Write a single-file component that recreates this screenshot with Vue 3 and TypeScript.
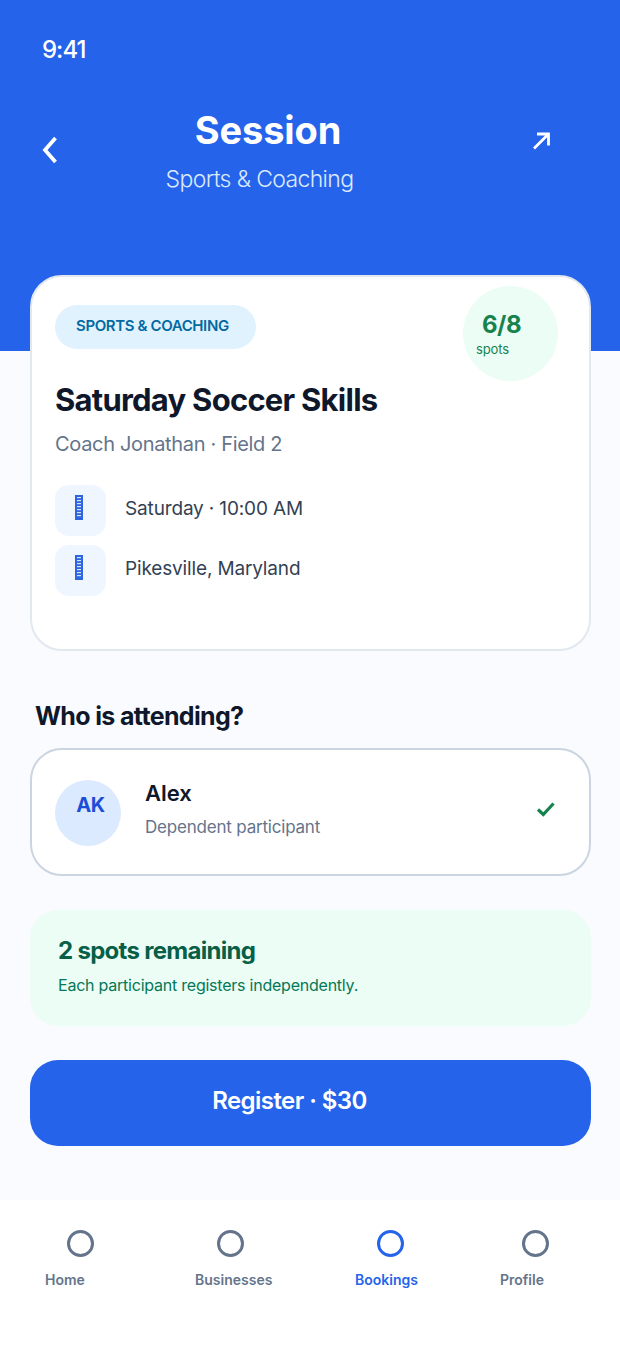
<script setup lang="ts">
interface InfoRow {
  id: string
  label: string
}

interface NavItem {
  label: string
  active: boolean
}

const infoRows: InfoRow[] = [
  { id: 'when', label: 'Saturday · 10:00 AM' },
  { id: 'where', label: 'Pikesville, Maryland' },
]

const navItems: NavItem[] = [
  { label: 'Home', active: false },
  { label: 'Businesses', active: false },
  { label: 'Bookings', active: true },
  { label: 'Profile', active: false },
]

// little white marks inside the placeholder glyph
const ticks = [2, 5, 8, 11, 14, 17, 20]
</script>

<template>
  <div class="screen">
    <header class="hero">
      <div class="status-time">9:41</div>
      <div class="hero-bar">
        <button class="hero-btn back" aria-label="Back">
          <svg width="20" height="28" viewBox="0 0 20 28" fill="none">
            <path d="M15.5 2 5 14l10.5 12" stroke="#fff" stroke-width="3.8" />
          </svg>
        </button>
        <div class="hero-titles">
          <h1 class="hero-title">Session</h1>
          <p class="hero-sub">Sports &amp; Coaching</p>
        </div>
        <button class="hero-btn share" aria-label="Share">
          <svg width="20" height="20" viewBox="0 0 20 20" fill="none">
            <path d="M3 17.5 17 3.5M6 3h11.5v11.5" stroke="#fff" stroke-width="2.8" />
          </svg>
        </button>
      </div>
    </header>

    <main class="content">
      <section class="session-card">
        <div class="spots-badge">
          <strong class="spots-count">6/8</strong>
          <span class="spots-label">spots</span>
        </div>
        <span class="category-chip">SPORTS &amp; COACHING</span>
        <h2 class="session-name">Saturday Soccer Skills</h2>
        <p class="session-coach">Coach Jonathan · Field 2</p>
        <ul class="info-list">
          <li v-for="row in infoRows" :key="row.id" class="info-row">
            <span class="info-icon">
              <svg width="8" height="25" viewBox="0 0 8 25">
                <rect width="8" height="25" fill="#2f66e0" />
                <rect v-for="t in ticks" :key="t" x="2" :y="t" width="4" height="1.2" fill="#d6e4fb" />
              </svg>
            </span>
            <span class="info-text">{{ row.label }}</span>
          </li>
        </ul>
      </section>

      <h3 class="section-title">Who is attending?</h3>

      <section class="attendee">
        <span class="avatar">AK</span>
        <div class="attendee-body">
          <div class="attendee-name">Alex</div>
          <div class="attendee-role">Dependent participant</div>
        </div>
        <svg class="attendee-check" width="20" height="16" viewBox="0 0 20 16" fill="none">
          <path d="M2 8.5 7.3 13.5 17.5 2.5" stroke="#16834f" stroke-width="3.2" />
        </svg>
      </section>

      <section class="remaining">
        <div class="remaining-title">2 spots remaining</div>
        <div class="remaining-note">Each participant registers independently.</div>
      </section>

      <button class="register-btn">Register · $30</button>
    </main>

    <nav class="tabbar">
      <div
        v-for="item in navItems"
        :key="item.label"
        class="tab"
        :class="{ 'tab--active': item.active }"
      >
        <span class="tab-ring"></span>
        <span class="tab-label">{{ item.label }}</span>
      </div>
    </nav>
  </div>
</template>

<style scoped>
.screen {
  display: flex;
  flex-direction: column;
  width: 620px;
  height: 1349px;
  overflow: hidden;
  background: #f9fbfe;
  font-family: Inter, "Liberation Sans", sans-serif;
  color: #0f172a;
}

.hero {
  height: 351px;
  flex: none;
  padding: 35px 42px 0;
  box-sizing: border-box;
  background: #2563eb;
  color: #fff;
}

.status-time {
  font-size: 24px;
  font-weight: 500;
  line-height: 29px;
  letter-spacing: -1px;
}

.hero-bar {
  display: flex;
  margin-top: 43px;
}

.hero-btn {
  display: flex;
  padding: 0;
  border: none;
  background: none;
  cursor: pointer;
}

.back {
  margin: 29px 0 0 -2px;
}

.share {
  margin: 24px 27px 0 auto;
}

.hero-titles {
  width: 200px;
  margin-left: 108px;
  text-align: center;
}

.hero-title {
  margin: 0;
  font-size: 38px;
  font-weight: 700;
  line-height: 46px;
  letter-spacing: -0.1px;
}

.hero-sub {
  margin: 12px 0 0 -17px;
  font-size: 23px;
  font-weight: 300;
  line-height: 29px;
  letter-spacing: -0.65px;
  white-space: nowrap;
  color: #dbeafe;
}

.content {
  flex: 1;
  display: flex;
  flex-direction: column;
  margin-top: -76px;
  padding: 0 29px 0 30px;
}

.session-card {
  position: relative;
  height: 376px;
  box-sizing: border-box;
  padding: 28px 23px 0;
  background: #fff;
  border: 2px solid #e2e8f0;
  border-radius: 32px;
}

.spots-badge {
  position: absolute;
  top: 9px;
  right: 31px;
  width: 95px;
  height: 95px;
  box-sizing: border-box;
  padding: 23px 0 0 13px;
  border-radius: 50%;
  background: #ecfdf5;
}

.spots-count {
  display: block;
  padding-left: 6px;
  font-size: 24px;
  font-weight: 700;
  line-height: 32px;
  letter-spacing: -0.5px;
  color: #16834f;
}

.spots-label {
  display: block;
  font-size: 13px;
  line-height: 17px;
  font-weight: 400;
  letter-spacing: -0.1px;
  color: #16834f;
}

.category-chip {
  display: inline-block;
  height: 44px;
  padding: 0 27px 0 21px;
  box-sizing: border-box;
  background: #e0f2fe;
  border-radius: 22px;
  font-size: 15px;
  font-weight: 600;
  line-height: 42px;
  letter-spacing: -0.38px;
  color: #0369a1;
}

.session-name {
  margin: 30px 0 0;
  font-size: 31px;
  font-weight: 700;
  line-height: 42px;
  letter-spacing: -0.75px;
  color: #0f172a;
}

.session-coach {
  margin: 10px 0 0;
  font-size: 20px;
  font-weight: 400;
  line-height: 27px;
  letter-spacing: -0.33px;
  color: #64748b;
}

.info-list {
  display: flex;
  flex-direction: column;
  gap: 9px;
  margin: 27px 0 0;
  padding: 0;
  list-style: none;
}

.info-row {
  display: flex;
  align-items: center;
  gap: 19px;
}

.info-icon {
  display: flex;
  align-items: center;
  justify-content: center;
  width: 51px;
  height: 51px;
  border-radius: 14px;
  background: #eff6ff;
}

.info-icon svg {
  margin: 0 3px 6px 0;
}

.info-text {
  margin-top: -3px;
  font-size: 19px;
  line-height: 26px;
  letter-spacing: -0.15px;
  color: #334155;
}

.section-title {
  margin: 49px 0 0 5px;
  font-size: 25px;
  font-weight: 700;
  line-height: 32px;
  letter-spacing: -0.65px;
  color: #0f172a;
}

.attendee {
  display: flex;
  align-items: center;
  height: 128px;
  box-sizing: border-box;
  margin-top: 16px;
  padding: 0 33px 0 23px;
  background: #fff;
  border: 2px solid #cbd5e1;
  border-radius: 32px;
}

.avatar {
  flex: none;
  width: 66px;
  height: 66px;
  box-sizing: border-box;
  padding-left: 5px;
  margin-top: 2px;
  border-radius: 50%;
  background: #dbeafe;
  color: #1d4ed8;
  font-size: 20px;
  font-weight: 700;
  line-height: 50px;
  letter-spacing: -0.4px;
  text-align: center;
}

.attendee-body {
  flex: 1;
  margin: -8px 0 0 24px;
}

.attendee-name {
  font-size: 22px;
  font-weight: 600;
  line-height: 28px;
  color: #0f172a;
}

.attendee-role {
  margin-top: 9px;
  font-size: 17px;
  line-height: 22px;
  letter-spacing: -0.2px;
  color: #64748b;
}

.attendee-check {
  margin-top: -6px;
}

.remaining {
  height: 116px;
  box-sizing: border-box;
  margin-top: 34px;
  padding: 26px 28px 0;
  background: #ecfdf5;
  border-radius: 28px;
}

.remaining-title {
  font-size: 24px;
  font-weight: 700;
  line-height: 30px;
  letter-spacing: -0.7px;
  color: #065f46;
}

.remaining-note {
  margin-top: 8px;
  font-size: 16px;
  line-height: 22px;
  letter-spacing: -0.23px;
  color: #047857;
}

.register-btn {
  height: 86px;
  flex: none;
  margin-top: 34px;
  padding: 0 42px 6px 0;
  border: none;
  border-radius: 28px;
  background: #2563eb;
  color: #fff;
  font-family: inherit;
  font-size: 24px;
  font-weight: 600;
  letter-spacing: -0.55px;
  cursor: pointer;
}

.tabbar {
  display: flex;
  flex: none;
  height: 149px;
  box-sizing: border-box;
  padding: 30px 0 0 45px;
  background: #fff;
}

.tab {
  display: flex;
  flex-direction: column;
  align-items: flex-start;
  gap: 14px;
  color: #64748b;
}

.tab:nth-child(1) {
  width: 150px;
}

.tab:nth-child(2) {
  width: 160px;
}

.tab:nth-child(3) {
  width: 145px;
}

.tab--active {
  color: #2563eb;
}

.tab-ring {
  width: 27px;
  height: 27px;
  margin-left: 22px;
  box-sizing: border-box;
  border: 3px solid currentColor;
  border-radius: 50%;
}

.tab-label {
  font-size: 14px;
  font-weight: 600;
  line-height: 17px;
}
</style>
